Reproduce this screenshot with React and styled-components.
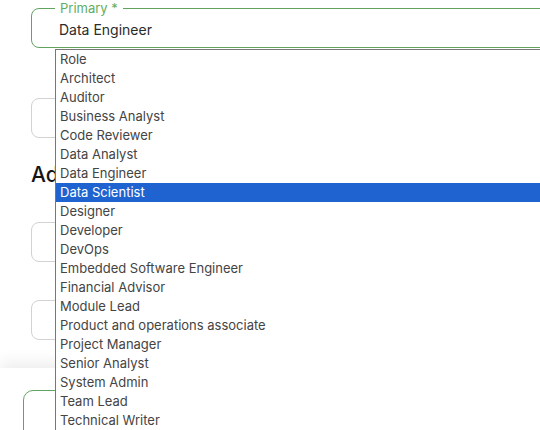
import React from "react";
import styled, { createGlobalStyle } from "styled-components";

const Global = createGlobalStyle`
  html, body { margin: 0; padding: 0; background: #fff; overflow: hidden; }
  body { font-family: Inter, "Open Sans", "Liberation Sans", sans-serif; width: 540px; height: 430px; }
  * { box-sizing: border-box; }
`;

const Page = styled.div`
  position: relative;
  width: 540px;
  height: 430px;
  overflow: hidden;
  display: flex;
  flex-direction: column;
`;

const Form = styled.div`
  display: flex;
  flex-direction: column;
  padding: 8px 0 0 31px;
  width: 700px;
`;

const Field = styled.div`
  position: relative;
  height: 40px;
  border: 1px solid ${(p) => (p.$active ? "#62a362" : "#d2d2d2")};
  border-radius: 8px;
  display: flex;
  align-items: center;
  padding: 3px 0 0 27px;
  margin-top: ${(p) => p.$mt || 0}px;
  font-size: 14px;
  color: #2b2b2b;
`;

const Legend = styled.span`
  position: absolute;
  top: -10px;
  left: 23px;
  padding: 0 5px;
  background: #fff;
  font-size: 13px;
  line-height: 18px;
  color: ${(p) => (p.$active ? "#5fae5f" : "#666")};
`;

const Heading = styled.h2`
  margin: 23px 0 0;
  font-size: 21px;
  line-height: 28px;
  font-weight: 500;
  color: #151515;
`;

const Footer = styled.div`
  margin-top: 28px;
  flex: 1;
  background: #fff;
  box-shadow: 0 -6px 14px rgba(0, 0, 0, 0.07);
  padding: 22px 0 0 23px;
`;

const FooterButton = styled.button`
  width: 120px;
  height: 52px;
  border: 1px solid #62a362;
  border-radius: 10px;
  background: #fff;
`;

const Listbox = styled.ul`
  position: absolute;
  top: 49px;
  left: 55px;
  width: 520px;
  height: 400px;
  margin: 0;
  padding: 0;
  list-style: none;
  background: #fff;
  border: 1px solid #777;
  border-right: none;
  border-bottom: none;
`;

const Option = styled.li`
  height: 19px;
  line-height: 19px;
  padding-left: 4px;
  font-size: 13px;
  white-space: nowrap;
  color: ${(p) => (p.$selected ? "#fff" : "#444")};
  background: ${(p) => (p.$selected ? "#1f63d0" : "transparent")};
`;

const roles = [
  "Role",
  "Architect",
  "Auditor",
  "Business Analyst",
  "Code Reviewer",
  "Data Analyst",
  "Data Engineer",
  "Data Scientist",
  "Designer",
  "Developer",
  "DevOps",
  "Embedded Software Engineer",
  "Financial Advisor",
  "Module Lead",
  "Product and operations associate",
  "Project Manager",
  "Senior Analyst",
  "System Admin",
  "Team Lead",
  "Technical Writer",
];

export default function App() {
  return (
    <Page>
      <Global />
      <Form>
        <Field $active>
          <Legend $active>Primary *</Legend>
          Data Engineer
        </Field>
        <Field $mt={50}>
          <Legend>Secondary</Legend>
        </Field>
        <Heading>Additional details</Heading>
        <Field $mt={33} />
        <Field $mt={38} />
      </Form>
      <Footer>
        <FooterButton />
      </Footer>
      <Listbox>
        {roles.map((r) => (
          <Option key={r} $selected={r === "Data Scientist"}>
            {r}
          </Option>
        ))}
      </Listbox>
    </Page>
  );
}
